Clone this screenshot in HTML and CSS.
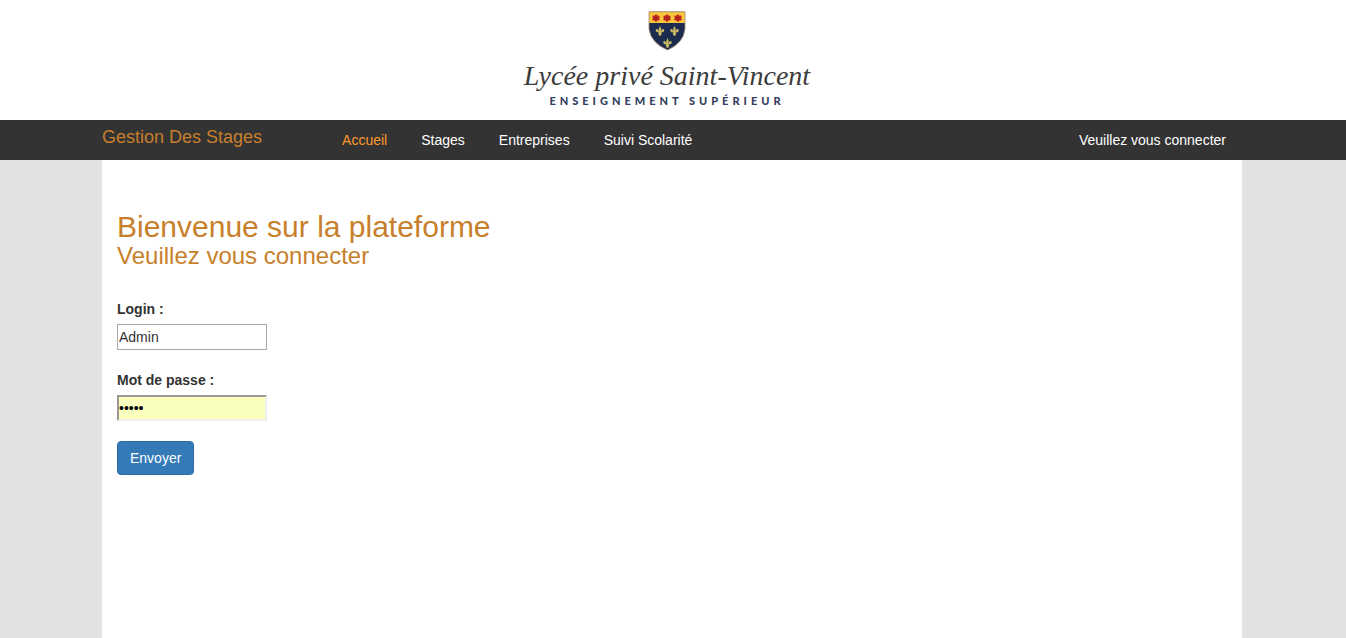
FILE: index.html
```html
<!DOCTYPE html>
<html lang="fr">
<head>
<meta charset="utf-8">
<meta name="viewport" content="width=device-width, initial-scale=1">
<title>Gestion Des Stages</title>
<link rel="stylesheet" href="styles.css">
</head>
<body>
<header class="banner">
  <svg class="crest" viewBox="0 0 38 40" aria-hidden="true">
    <defs>
      <clipPath id="shield"><path d="M1 .8H37V18Q35.500 32 19.500 39Q3 32 1 18Z"/></clipPath>
      <g id="rose" fill="#b8201c">
        <circle cy="-2.300" r="1.300"/><circle cx="2.300" cy="-1.100" r="1.300"/><circle cx="2.300" cy="1.300" r="1.300"/><circle cy="2.400" r="1.300"/><circle cx="-2.300" cy="1.300" r="1.300"/><circle cx="-2.300" cy="-1.100" r="1.300"/>
        <circle r="1.800"/>
        <circle r=".8" fill="#74231c"/>
      </g>
      <path id="lily" fill="#cdbb62" d="M0-5Q2-2 1 .5Q2-2.500 4-1.800Q5 0 3 1.500Q3 0 1 1.500H2V2.500H1L1.500 4L0 5L-1.500 4L-1 2.500H-2V1.500H-1Q-3 0-3 1.500Q-5 0-4-1.800Q-2-2.500-1 .5Q-2-2 0-5Z"/>
    </defs>
    <g clip-path="url(#shield)">
      <path fill="#1c2c50" d="M0 0H38V40H0Z"/>
      <path fill="#fac63c" d="M0 0H38V12H0Z"/>
    </g>
    <path fill="none" stroke="#a58e70" stroke-width=".8" d="M1 .8H37V18Q35.500 32 19.500 39Q3 32 1 18Z"/>
    <use href="#rose" x="8" y="7"/><use href="#rose" x="19" y="7"/><use href="#rose" x="30" y="7"/>
    <use href="#lily" x="12" y="20"/><use href="#lily" x="26.500" y="20"/><use href="#lily" x="19.500" y="32"/>
  </svg>
  <p class="school">Lycée privé Saint-Vincent</p>
  <p class="tagline">ENSEIGNEMENT SUPÉRIEUR</p>
</header>
<nav class="navbar">
  <a class="brand" href="#">Gestion Des Stages</a>
  <ul class="menu">
    <li><a class="link active" href="#">Accueil</a></li>
    <li><a class="link" href="#">Stages</a></li>
    <li><a class="link" href="#">Entreprises</a></li>
    <li><a class="link" href="#">Suivi Scolarité</a></li>
  </ul>
  <a class="link session" href="#">Veuillez vous connecter</a>
</nav>
<div class="page">
  <main class="content">
    <h1 class="title">Bienvenue sur la plateforme</h1>
    <h2 class="subtitle">Veuillez vous connecter</h2>
    <form class="login">
      <div class="group">
        <label for="login">Login :</label>
        <input class="field plain" id="login" type="text" value="Admin">
      </div>
      <div class="group">
        <label for="password">Mot de passe :</label>
        <input class="field filled" id="password" type="password" value="admin">
      </div>
      <button class="submit" type="submit">Envoyer</button>
    </form>
  </main>
</div>
</body>
</html>
```
FILE: styles.css
```css
* { box-sizing: border-box; }
body {
  margin: 0;
  min-height: 100vh;
  display: flex;
  flex-direction: column;
  background: #fff;
  color: #333;
  font: 14px/20px "Liberation Sans", Arial, sans-serif;
}
.banner {
  display: flex;
  flex-direction: column;
  align-items: center;
  padding: 11px 12px 11px 0;
}
.crest { width: 38px; height: 40px; }
.school {
  margin: 8px 0 0;
  color: #3c3c3c;
  font: italic 28px/34px "Liberation Serif", serif;
}
.tagline {
  margin: 0;
  color: #34405f;
  font: 900 11px/16px Lato, sans-serif;
  letter-spacing: 4px;
}
.navbar {
  display: flex;
  align-items: center;
  min-height: 40px;
  padding: 0 120px 0 102px;
  background: #333;
}
.brand {
  padding-bottom: 6px;
  color: #c87f2b;
  font-size: 18px;
  text-decoration: none;
}
.menu {
  display: flex;
  gap: 34px;
  margin: 0 0 0 80px;
  padding: 0;
  list-style: none;
}
.link { color: #fff; text-decoration: none; }
.active { color: #ff9a2e; }
.session { margin-left: auto; }
.page {
  flex: 1;
  display: flex;
  padding: 0 104px 0 102px;
  background: #e2e2e2;
}
.content {
  flex: 1;
  padding: 50px 15px;
  background: #fff;
}
.title, .subtitle { margin: 0; color: #c87f2b; font-weight: normal; }
.title { font-size: 30px; line-height: 33px; }
.subtitle { font-size: 24px; line-height: 26px; }
.login {
  display: flex;
  flex-direction: column;
  align-items: flex-start;
  gap: 20px;
  margin-top: 30px;
}
.group { display: flex; flex-direction: column; gap: 5px; }
label { font-weight: bold; }
.field {
  width: 150px;
  height: 26px;
  color: #333;
  font: inherit;
}
.plain { padding: 1px; border: 1px solid #a9a9a9; background: #fff; }
.filled {
  padding: 0;
  border: 2px solid;
  border-color: #999 #eee #eee #999;
  background: #faffbd;
  color: #000;
}
.submit {
  padding: 6px 12px;
  border: 1px solid #2e6da4;
  border-radius: 4px;
  background: #337ab7;
  color: #fff;
  font: inherit;
}
```
